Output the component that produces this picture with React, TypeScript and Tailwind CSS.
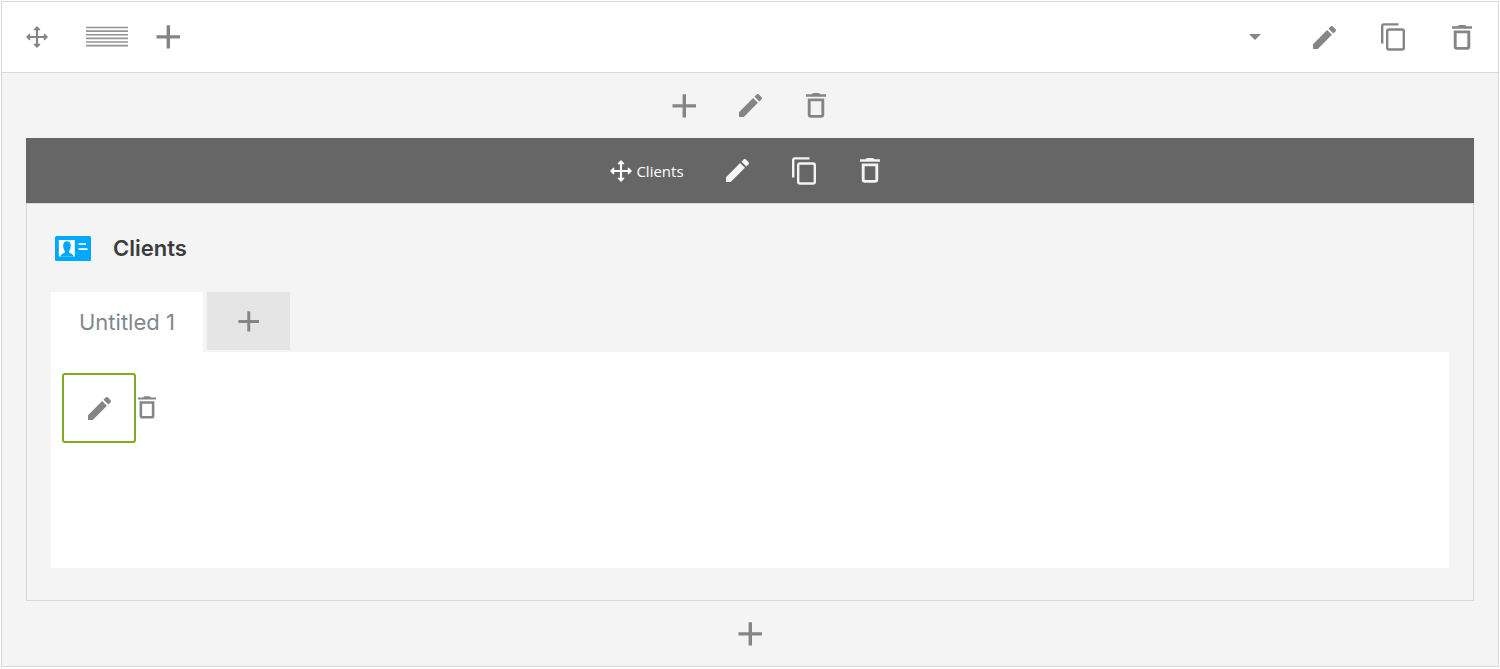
import React from "react";

type IconProps = { className?: string };

const Plus = ({ className = "size-6" }: IconProps) => (
  <svg viewBox="0 0 24 24" className={className} fill="none" stroke="currentColor" strokeWidth="3.400" aria-hidden="true">
    <path d="M12.300 0.300V23.500M0.500 11.900H24" />
  </svg>
);

const Pencil = () => (
  <svg viewBox="3 3 18 18" className="size-[23px]" fill="currentColor" aria-hidden="true">
    <path d="M3 17.250V21h3.750L17.810 9.940l-3.750-3.750L3 17.250zM20.710 7.040c.390-.390.390-1.020 0-1.410l-2.340-2.340c-.390-.390-1.020-.390-1.410 0l-1.830 1.830 3.750 3.750 1.830-1.830z" />
  </svg>
);

const Copy = () => (
  <svg viewBox="0 0 24 28" className="h-7 w-6" fill="none" stroke="currentColor" strokeWidth="2.400" aria-hidden="true">
    <path d="M1.200 20.500V3.200Q1.200 1.400 3 1.400H17.500" />
    <rect x="6.200" y="6.500" width="16.600" height="20" rx="1.800" />
  </svg>
);

const Trash = ({ className = "h-[25px] w-5" }: IconProps) => (
  <svg viewBox="0 0 20 25" className={className} aria-hidden="true">
    <path fill="currentColor" d="M0 1.300H5.500Q6.500 0 8 0H12Q13.500 0 14.500 1.300H20V3.700H0Z" />
    <path fill="none" stroke="currentColor" strokeWidth="2.900" d="M3.200 6.900H16.800V21.600Q16.800 23.400 15 23.400H5Q3.200 23.400 3.200 21.600Z" />
  </svg>
);

const Move = () => (
  <svg viewBox="0 0 22 22" className="size-[22px]" fill="currentColor" aria-hidden="true">
    <path d="M11 0L14.200 3.200V4.200H12.100V9.900H17.800V7.800H18.800L22 11L18.800 14.200H17.800V12.100H12.100V17.800H14.200V18.800L11 22L7.800 18.800V17.800H9.900V12.100H4.200V14.200H3.200L0 11L3.200 7.800H4.200V9.900H9.900V4.200H7.800V3.200Z" />
  </svg>
);

const Rows = () => (
  <svg viewBox="0 0 42 22" className="h-[22px] w-[42px]" fill="none" stroke="currentColor" strokeWidth="1.600" aria-hidden="true">
    <path d="M0 1.500H42M0 5.100H42M0 8.700H42M0 12.400H42M0 16H42M0 19.600H42" />
  </svg>
);

const Card = () => (
  <svg viewBox="0 0 36 25" className="h-[25px] w-9" aria-hidden="true">
    <rect width="36" height="25" rx="1.500" fill="#00a9ff" />
    <path fill="#fff" d="M3.800 4H19.800V20.500H3.800Z" />
    <path fill="#00a9ff" d="M5.500 20.500Q6 18 8.500 17.300Q10.300 16.800 10 15.200Q8 13 8.200 9.500Q8.300 5.200 12 5.200Q15.700 5.200 15.800 9.500Q16 13 14 15.200Q13.700 16.800 15.500 17.300Q18 18 18.500 20.500Z" />
    <path stroke="#fff" strokeWidth="1.700" d="M23.500 8H31M23.500 13.200H32.500" />
  </svg>
);

const IconButton = ({ label, children }: { label: string; children: React.ReactNode }) => (
  <button type="button" aria-label={label} className="flex h-7 w-6 items-center justify-center">
    {children}
  </button>
);

export default function App() {
  return (
    <div className="bg-white p-px font-['Open_Sans',sans-serif] text-[#858585]">
      <section className="border border-[#d8d8d8] bg-[#f4f4f4]">
        <header className="flex h-[71px] items-center justify-between border-b border-[#d8d8d8] bg-white px-6">
          <div className="flex items-center">
            <button type="button" aria-label="Move row" className="mr-[38px]"><Move /></button>
            <button type="button" aria-label="Row layout" className="mr-7 text-[#949494]"><Rows /></button>
            <IconButton label="Add column"><Plus /></IconButton>
          </div>
          <div className="flex items-center gap-[45px]">
            <IconButton label="Toggle row">
              <svg viewBox="0 0 12 6" className="h-1.5 w-3" fill="currentColor" aria-hidden="true"><path d="M0 0H12L6 6Z" /></svg>
            </IconButton>
            <IconButton label="Edit row"><Pencil /></IconButton>
            <IconButton label="Clone row"><Copy /></IconButton>
            <IconButton label="Delete row"><Trash /></IconButton>
          </div>
        </header>

        <div className="flex h-[65px] items-center justify-center gap-[42px]">
          <IconButton label="Add element"><Plus /></IconButton>
          <IconButton label="Edit column"><Pencil /></IconButton>
          <IconButton label="Delete column"><Trash /></IconButton>
        </div>

        <div className="mx-6">
          <div className="flex h-[65px] items-center justify-center gap-[42px] bg-[#666] pr-2 text-[#f4f4f4]">
            <button type="button" className="flex items-center gap-1 text-[15px] leading-5 text-white">
              <Move />
              Clients
            </button>
            <IconButton label="Edit Clients"><Pencil /></IconButton>
            <IconButton label="Clone Clients"><Copy /></IconButton>
            <IconButton label="Delete Clients"><Trash /></IconButton>
          </div>

          <div className="border border-[#d8d8d8] px-6 pt-7 pb-8">
            <div className="flex h-8 items-center gap-[22px] pl-1">
              <Card />
              <h2 className="font-['Inter',sans-serif] text-[22px] leading-8 font-semibold text-[#3c3c3c]">Clients</h2>
            </div>

            <div role="tablist" className="mt-7 flex items-start gap-1">
              <button type="button" role="tab" aria-selected="true" className="h-[60px] bg-white px-7 font-['Inter',sans-serif] text-[22px] text-[#7f888e]">
                Untitled 1
              </button>
              <button type="button" aria-label="Add tab" className="flex h-[58px] w-[83px] items-center justify-center bg-[#e5e5e5]">
                <Plus className="size-[21px]" />
              </button>
            </div>

            <div role="tabpanel" className="flex h-[216px] items-start bg-white px-[11px] pt-[21px]">
              <button type="button" aria-label="Edit item" className="flex h-[70px] w-[74px] items-center justify-center rounded-[3px] border-2 border-[#82a82a]">
                <Pencil />
              </button>
              <button type="button" aria-label="Delete item" className="ml-0.5 flex h-[68px] items-center">
                <Trash className="h-[23px] w-[18px]" />
              </button>
            </div>
          </div>
        </div>

        <div className="flex h-[65px] items-center justify-center">
          <IconButton label="Add element"><Plus /></IconButton>
        </div>
      </section>
    </div>
  );
}
